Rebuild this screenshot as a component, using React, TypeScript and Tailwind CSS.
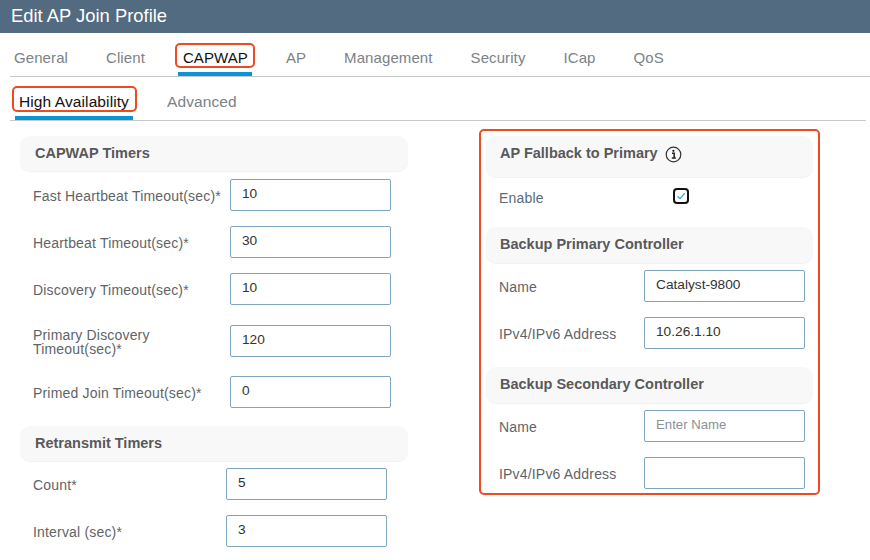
import type { ReactNode } from "react";

const tabs = ["General", "Client", "CAPWAP", "AP", "Management", "Security", "ICap", "QoS"];

function Field({ label, value, placeholder, width, className }: { label: ReactNode; value?: string; placeholder?: string; width: string; className: string }) {
  return (
    <div className={`flex items-center ${className}`}>
      <label className={`${width} shrink-0 pt-[2px] text-[14px] leading-[14px] tracking-[0.18px] text-[#5f6468]`}>{label}</label>
      <input
        readOnly
        value={value ?? ""}
        placeholder={placeholder}
        className="h-[32px] w-[161px] rounded-[2px] border border-[#7fa6bd] bg-white pb-[4px] pl-[11px] text-[13.7px] text-[#333] outline-none placeholder:text-[13.2px] placeholder:text-[#8c9196]"
      />
    </div>
  );
}

function SectionHead({ children, className }: { children: ReactNode; className: string }) {
  return (
    <div className={`flex items-center rounded-[10px] bg-[#f8f8f8] text-[14.5px] font-bold text-[#58595b] shadow-[0_1px_1px_#f1f1f1] ${className}`}>
      {children}
    </div>
  );
}

export default function App() {
  return (
    <div className="h-[560px] w-[870px] overflow-hidden bg-white font-['Liberation_Sans',sans-serif]">
      <header className="flex h-[33px] items-center bg-[#526b80] pb-[2px] pl-[11px] text-[18.4px] text-white">Edit AP Join Profile</header>

      <nav className="ml-[10px] flex h-[44px] items-center gap-[38px] border-b-[1px] border-[#c6c8ca] pt-[8px] pl-[4px] text-[15px] tracking-[0.09px] text-[#7c8287]">
        {tabs.map((t) =>
          t === "CAPWAP" ? (
            <span key={t} className="relative text-[#111]">
              {t}
              <span className="absolute top-[-4px] left-[-8px] h-[25px] w-[80px] rounded-[5px] border-2 border-[#ee4b23]" />
              <span className="absolute top-[25px] left-[-5px] h-[4px] w-[74px] bg-[#0d94d2]" />
            </span>
          ) : (
            <span key={t}>{t}</span>
          ),
        )}
      </nav>

      <div className="mr-[4px] ml-[10px] flex h-[44px] items-center gap-[38px] border-b border-[#c6c8ca] pt-[7px] pl-[9px] text-[15.5px] tracking-[0.1px] text-[#7c8287]">
        <span className="relative text-[#111]">
          High Availability
          <span className="absolute top-[-4px] left-[-7px] h-[26px] w-[125px] rounded-[5px] border-2 border-[#ee4b23]" />
          <span className="absolute top-[26px] left-[-4px] h-[4px] w-[118px] bg-[#0d94d2]" />
        </span>
        <span>Advanced</span>
      </div>

      <div className="flex items-start">
        <section className="ml-[20px] w-[388px] pt-[15px]">
          <SectionHead className="h-[35px] pl-[15px]">CAPWAP Timers</SectionHead>
          <div className="pl-[13px]">
            <Field className="mt-[8px]" width="w-[197px]" label="Fast Heartbeat Timeout(sec)*" value="10" />
            <Field className="mt-[15px]" width="w-[197px]" label="Heartbeat Timeout(sec)*" value="30" />
            <Field className="mt-[15px]" width="w-[197px]" label="Discovery Timeout(sec)*" value="10" />
            <Field className="mt-[20px]" width="w-[197px]" label={<>Primary Discovery<br />Timeout(sec)*</>} value="120" />
            <Field className="mt-[19px]" width="w-[197px]" label="Primed Join Timeout(sec)*" value="0" />
          </div>
          <SectionHead className="mt-[18px] h-[35px] pl-[15px]">Retransmit Timers</SectionHead>
          <div className="pl-[13px]">
            <Field className="mt-[7px]" width="w-[193px]" label="Count*" value="5" />
            <Field className="mt-[15px]" width="w-[193px]" label="Interval (sec)*" value="3" />
          </div>
        </section>

        <section className="mt-[8px] ml-[71px] h-[366px] w-[341px] rounded-[5px] border-2 border-[#ee4b23] px-[5px] pt-[5px]">
          <SectionHead className="h-[41px] pb-[6px] pl-[14px]">
            AP Fallback to Primary
            <svg className="mt-[2px] ml-[7px]" width="17" height="17" viewBox="0 0 17 17" fill="none">
              <circle cx="8.5" cy="8.5" r="7.3" stroke="#333" strokeWidth="1.2" />
              <path d="M7 7.2h2.2v4.6M6.8 12h4" stroke="#222" strokeWidth="1.5" />
              <circle cx="8.4" cy="4.8" r="1.1" fill="#222" />
            </svg>
          </SectionHead>
          <div className="mt-[11px] flex h-[16px] items-center pl-[13px]">
            <span className="w-[174px] pt-[4px] text-[14px] tracking-[0.18px] text-[#5b6b78]">Enable</span>
            <span className="flex h-[16px] w-[16px] items-center justify-center rounded-[4px] border-2 border-[#111]">
              <svg width="10" height="10" viewBox="0 0 10 10" fill="none">
                <path d="M1.5 5.2 4 7.6 8.6 2.4" stroke="#2f9fe0" strokeWidth="1.3" />
              </svg>
            </span>
          </div>
          <SectionHead className="mt-[23px] h-[36px] pl-[14px]">Backup Primary Controller</SectionHead>
          <div className="pl-[13px]">
            <Field className="mt-[7px]" width="w-[145px]" label="Name" value="Catalyst-9800" />
            <Field className="mt-[15px]" width="w-[145px]" label="IPv4/IPv6 Address" value="10.26.1.10" />
          </div>
          <SectionHead className="mt-[18px] h-[36px] pl-[14px]">Backup Secondary Controller</SectionHead>
          <div className="pl-[13px]">
            <Field className="mt-[7px]" width="w-[145px]" label="Name" placeholder="Enter Name" />
            <Field className="mt-[15px]" width="w-[145px]" label="IPv4/IPv6 Address" />
          </div>
        </section>
      </div>
    </div>
  );
}
